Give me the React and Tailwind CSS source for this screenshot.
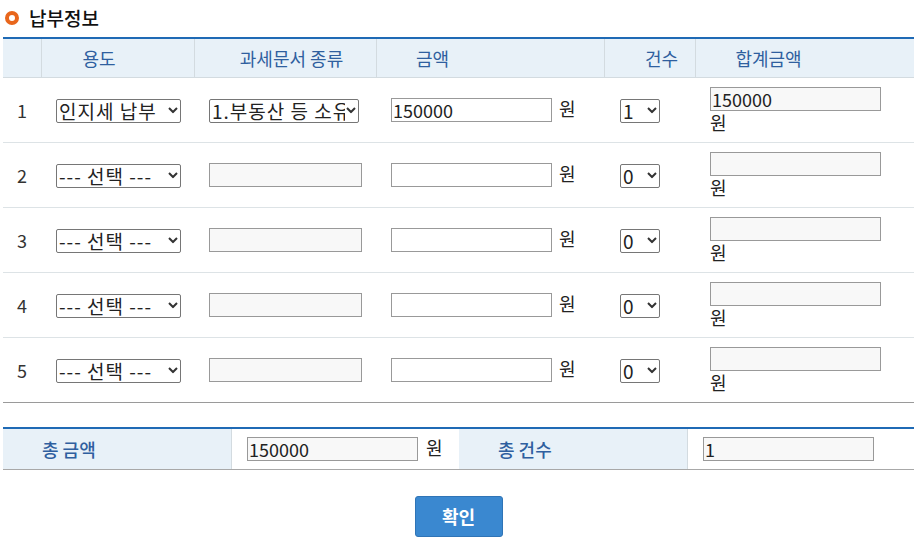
import React from "react";

const KR = { fontFamily: '"Noto Sans CJK KR", "Noto Sans", sans-serif' };

function Chevron() {
  return (
    <svg
      className="pointer-events-none absolute right-[3px] top-1/2 -translate-y-1/2"
      width="10"
      height="7"
      viewBox="0 0 10 7"
    >
      <path d="M1 1.5l4 4 4-4" fill="none" stroke="#333" strokeWidth="2" />
    </svg>
  );
}

function Select({ value, width }) {
  return (
    <div className={`relative ${width} h-[24px]`}>
      <select
        defaultValue={value}
        className="h-full w-full appearance-none rounded-[2px] border border-[#767676] bg-white pl-[2px] pr-[13px] text-[19px] leading-[20px] tracking-[1px] text-[#222] outline-none"
        style={KR}
      >
        <option>{value}</option>
      </select>
      <Chevron />
    </div>
  );
}

function Box({ value = "", width = "w-[171px]", white }) {
  return (
    <input
      readOnly
      value={value}
      className={`h-[24px] ${width} border border-[#999] px-[1px] text-[18px] leading-[20px] text-[#222] outline-none ${
        white ? "bg-white" : "bg-[#f8f8f8]"
      }`}
      style={KR}
    />
  );
}

const rows = [
  { n: 1, use: "인지세 납부", kind: "1.부동산 등 소유", amt: "150000", cnt: "1", total: "150000" },
  { n: 2, use: "--- 선택 ---", kind: "", amt: "", cnt: "0", total: "" },
  { n: 3, use: "--- 선택 ---", kind: "", amt: "", cnt: "0", total: "" },
  { n: 4, use: "--- 선택 ---", kind: "", amt: "", cnt: "0", total: "" },
  { n: 5, use: "--- 선택 ---", kind: "", amt: "", cnt: "0", total: "" },
];

const cols = "grid grid-cols-[38px_153px_182px_228px_91px_219px]";

export default function App() {
  return (
    <div className="h-[540px] w-[914px] overflow-hidden bg-white text-[#222]" style={KR}>
      {/* title */}
      <div className="flex h-[37px] items-center pl-[5px] pb-[2px]">
        <div className="h-[14px] w-[14px] rounded-full border-[4px] border-[#e8661c] bg-white" />
        <span className="ml-[10px] text-[19px] font-medium leading-none text-[#111]">납부정보</span>
      </div>

      <div className="ml-[3px] w-[911px]">
        {/* header */}
        <div className={`${cols} h-[41px] border-t-2 border-b border-t-[#1f6ab5] border-b-[#d3dbe0] bg-[#e8f1f8] text-[18px] text-[#2f5f9f]`}>
          <div />
          <div className="flex items-center justify-center border-l border-[#d3dbe0] pr-[38px]">용도</div>
          <div className="flex items-center justify-center border-l border-[#d3dbe0] pl-[12px]">과세문서 종류</div>
          <div className="flex items-center justify-center border-l border-[#d3dbe0] pr-[116px]">금액</div>
          <div className="flex items-center justify-center border-l border-[#d3dbe0] pl-[23px]">건수</div>
          <div className="flex items-center justify-center border-l border-[#d3dbe0] pr-[73px]">합계금액</div>
        </div>

        {/* body */}
        {rows.map((r) => (
          <div
            key={r.n}
            className={`${cols} h-[65px] border-b text-[18px] ${
              r.n === 5 ? "border-[#9a9a9a]" : "border-[#dde3e6]"
            }`}
          >
            <div className="flex items-center justify-center text-[#333]">{r.n}</div>
            <div className="flex items-center pl-[15px]">
              <Select value={r.use} width="w-[125px]" />
            </div>
            <div className="flex items-center pl-[15px]">
              {r.kind ? (
                <Select value={r.kind} width="w-[150px]" />
              ) : (
                <Box width="w-[153px]" />
              )}
            </div>
            <div className="flex items-center pl-[15px]">
              <Box value={r.amt} width="w-[161px]" white />
              <span className="-mt-[4px] ml-[7px] leading-[20px]">원</span>
            </div>
            <div className="flex items-center pl-[16px]">
              <Select value={r.cnt} width="w-[40px]" />
            </div>
            <div className="flex flex-col justify-center pl-[15px]">
              <Box value={r.total} />
              <span className="leading-[22px]">원</span>
            </div>
          </div>
        ))}

        {/* summary */}
        <div className="mt-[24px] grid h-[43px] grid-cols-[228px_228px_228px_227px] border-t-2 border-b border-t-[#1f6ab5] border-b-[#a8a8a8] text-[18px]">
          <div className="flex items-center bg-[#e8f1f8] pl-[39px] font-medium text-[#2f5f9f]">총 금액</div>
          <div className="flex items-center border-l border-[#d3dbe0] pl-[15px]">
            <Box value="150000" width="w-[171px]" />
            <span className="-mt-[4px] ml-[8px] leading-[20px]">원</span>
          </div>
          <div className="flex items-center bg-[#e8f1f8] pl-[39px] font-medium text-[#2f5f9f]">총 건수</div>
          <div className="flex items-center border-l border-[#d3dbe0] pl-[15px]">
            <Box value="1" width="w-[171px]" />
          </div>
        </div>

        {/* button */}
        <div className="mt-[26px] flex justify-center">
          <button className="h-[41px] w-[88px] rounded-[3px] border border-[#2f74b6] bg-[#3a88d0] text-[18px] font-bold text-white">
            확인
          </button>
        </div>
      </div>
    </div>
  );
}
